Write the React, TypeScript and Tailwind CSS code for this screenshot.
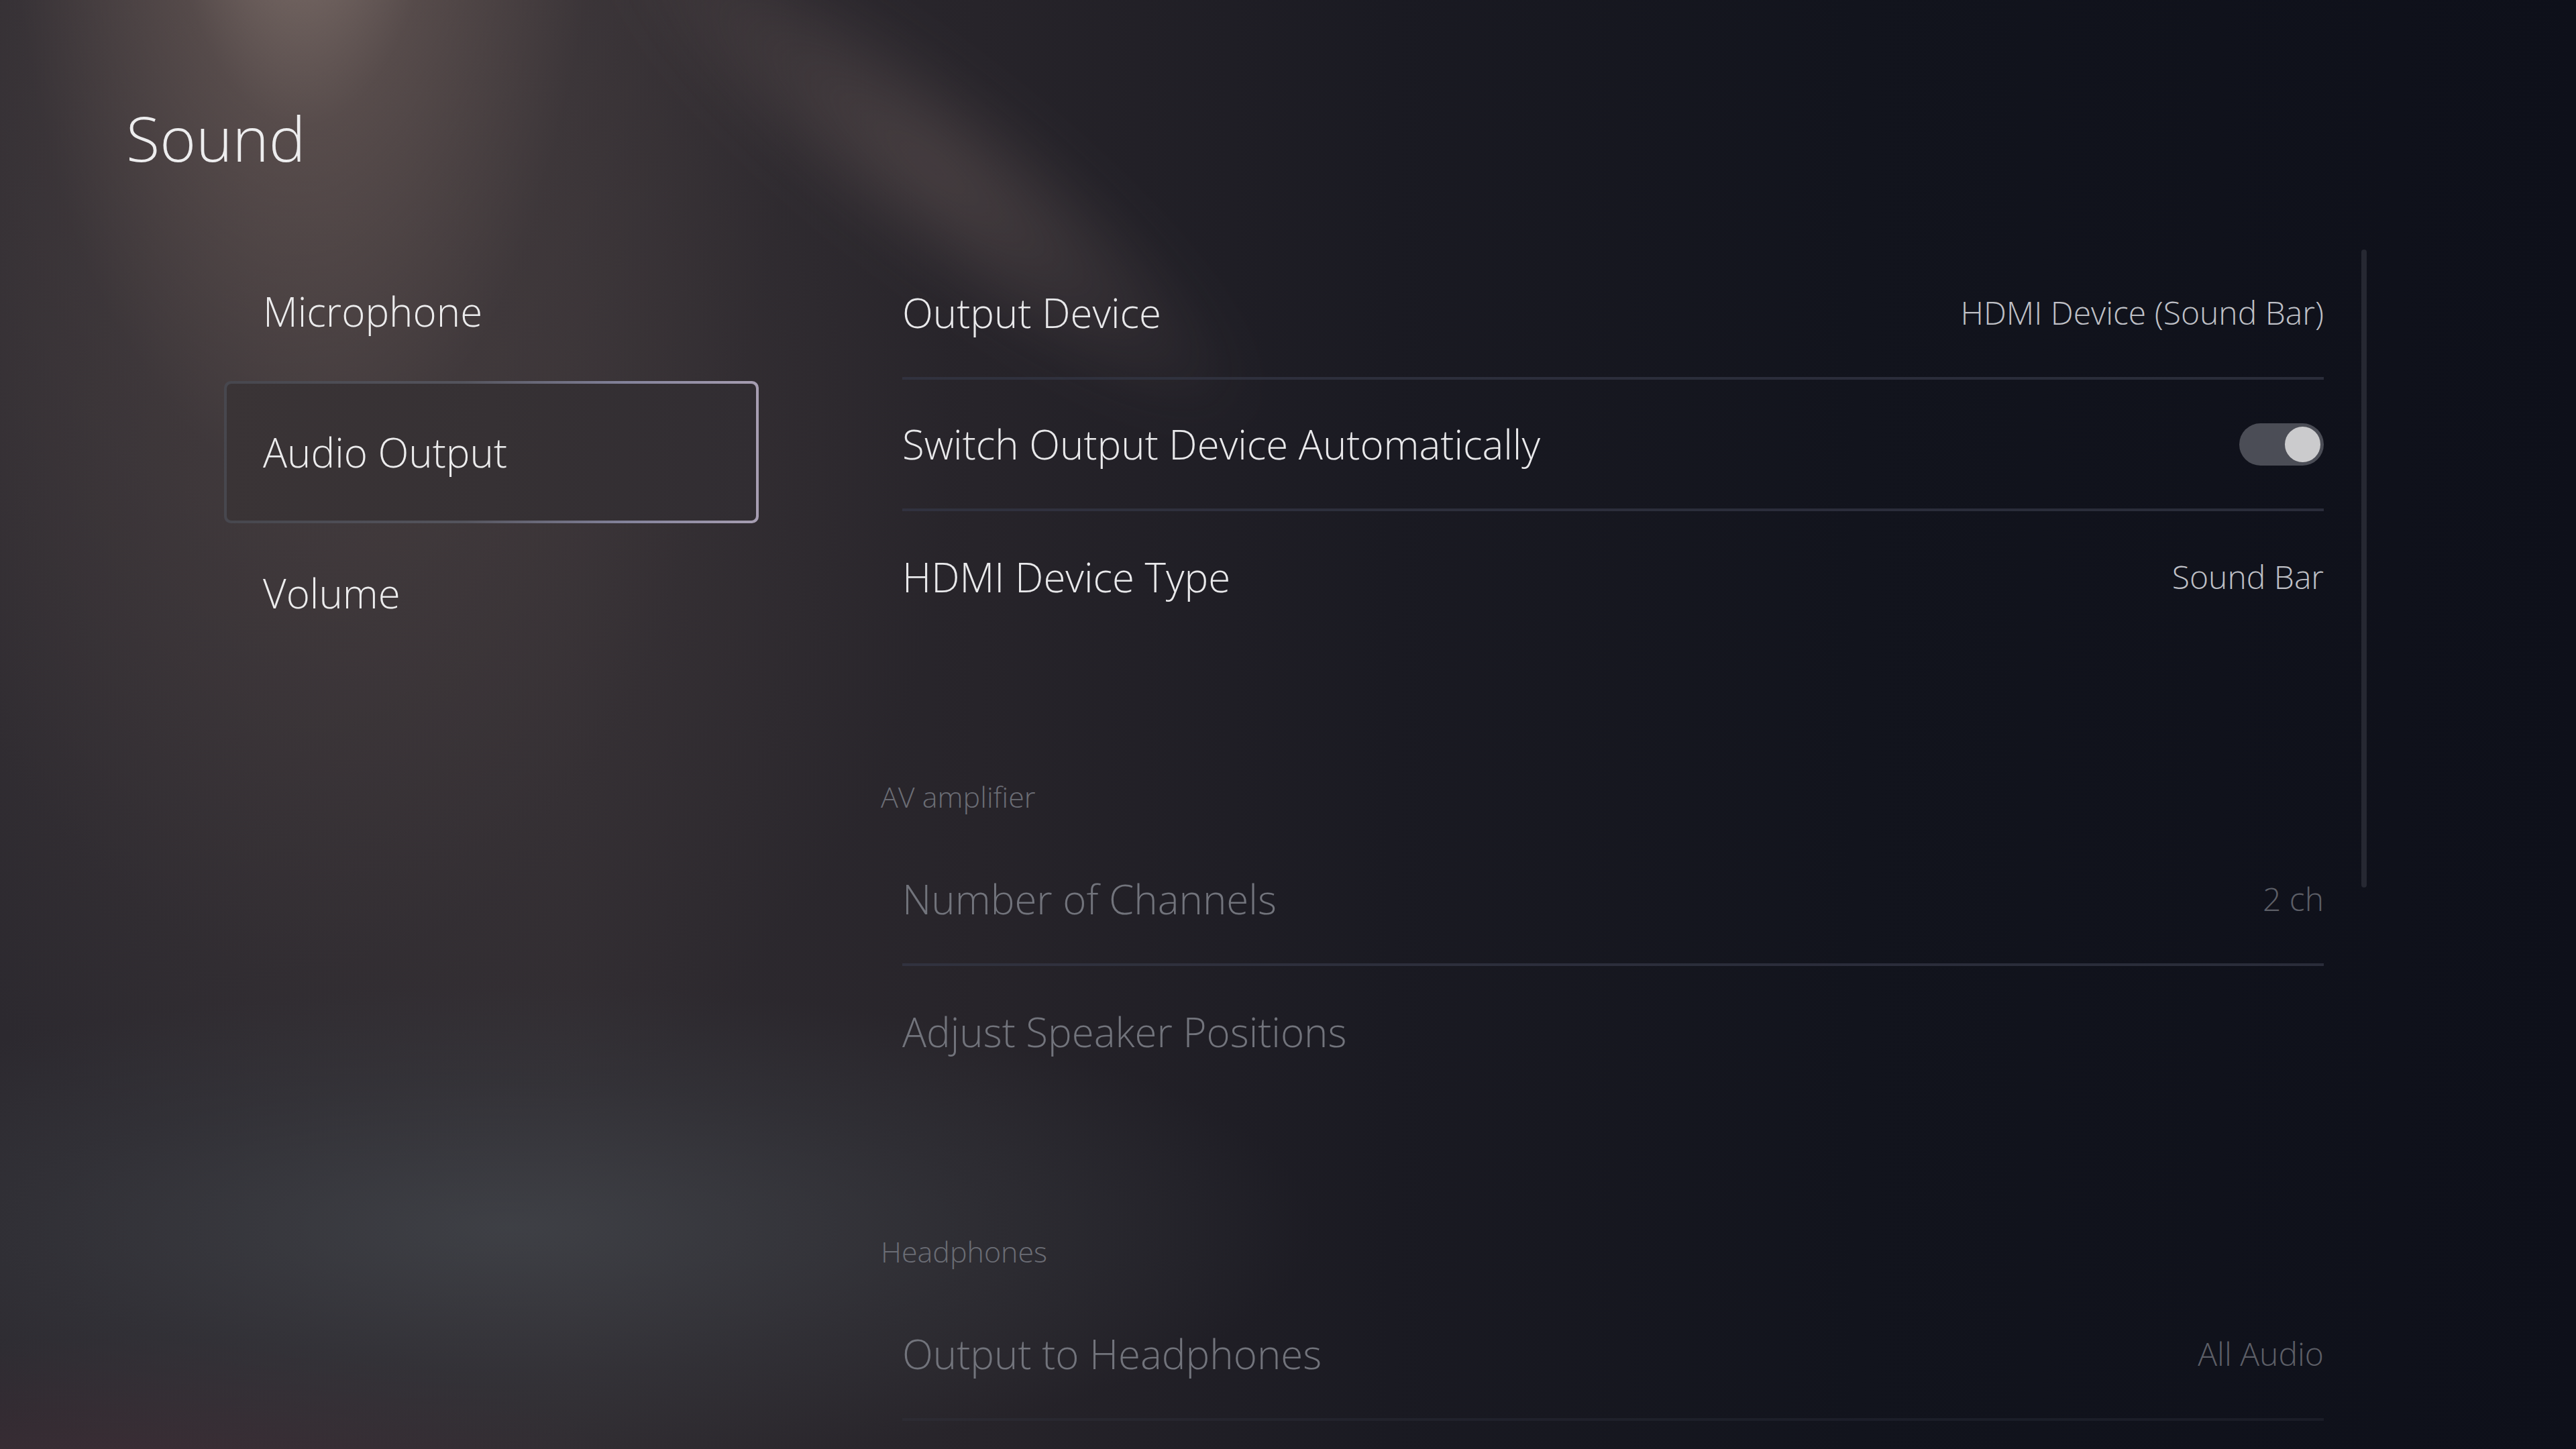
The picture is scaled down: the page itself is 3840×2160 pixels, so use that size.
import { type ReactNode } from "react";

const menu = ["Microphone", "Audio Output", "Volume"];

function Toggle() {
  return (
    <div className="flex h-[63px] w-[126px] items-center justify-end rounded-full bg-[#4b4d56] pr-[5px]">
      <div className="h-[53px] w-[53px] rounded-full bg-[#cbcbcd]" />
    </div>
  );
}

function Row({
  label,
  value,
  divider = true,
  dim = false,
  faintDivider = false,
}: {
  label: string;
  value?: ReactNode;
  divider?: boolean;
  dim?: boolean;
  faintDivider?: boolean;
}) {
  return (
    <div
      className={`mx-[32px] flex h-[196px] items-center justify-between ${
        divider
          ? faintDivider
            ? "border-b-4 border-[rgba(52,55,70,0.3)]"
            : "border-b-4 border-[rgba(52,55,70,0.72)]"
          : ""
      }`}
    >
      <span className={`text-[60px] leading-none ${dim ? "text-[#72747c]" : "text-[#e9e9eb]"}`}>
        {label}
      </span>
      {typeof value === "string" ? (
        <span className={`text-[48px] leading-none ${dim ? "text-[#5d5f67]" : "text-[#bfc0c6]"}`}>
          {value}
        </span>
      ) : (
        value
      )}
    </div>
  );
}

function SectionTitle({ children }: { children: ReactNode }) {
  return (
    <div className="mb-[27px] mt-[199px] flex h-[60px] items-center text-[43px] leading-none text-[#6b6d75]">
      {children}
    </div>
  );
}

export default function App() {
  return (
    <div className="relative h-[2160px] w-[3840px] overflow-hidden bg-[#10121b] bg-[radial-gradient(ellipse_760px_1750px_at_450px_-300px,rgba(178,157,146,0.74)_0%,rgba(124,106,100,0.47)_28%,rgba(82,72,72,0.25)_58%,transparent_100%),radial-gradient(ellipse_1600px_480px_at_760px_1830px,rgba(74,80,86,0.55)_0%,rgba(60,64,70,0.3)_45%,transparent_75%),radial-gradient(ellipse_1000px_330px_at_200px_2240px,rgba(74,50,60,0.6)_0%,transparent_75%),radial-gradient(ellipse_1250px_1500px_at_520px_650px,rgba(72,63,64,0.55)_0%,transparent_72%),linear-gradient(90deg,#2c292f_0%,#302c31_22%,#27242a_38%,#1a1a22_54%,#12141d_72%,#0e101a_100%)] font-['Open_Sans',sans-serif] font-light">
      {/* light streak */}
      <div className="pointer-events-none absolute left-[790px] top-[110px] h-[280px] w-[1200px] rotate-[38deg] bg-[radial-gradient(ellipse_closest-side,rgba(150,128,122,0.3),transparent)] blur-[36px]" />

      <div className="relative flex flex-col">
        <h1 className="pl-[188px] pt-[160px] text-[92px] font-light leading-none text-[#ededee]">Sound</h1>

        <div className="mt-[108px] flex pl-[334px]">
          {/* left menu */}
          <nav className="flex w-[797px] flex-col">
            {menu.map((item) =>
              item === "Audio Output" ? (
                <div
                  key={item}
                  className="h-[212px] rounded-[10px] bg-[linear-gradient(90deg,#47474e_0%,#54545d_45%,#83829a_75%,#a79eb2_100%)] p-[4px]"
                >
                  <div className="flex h-full items-center rounded-[7px] bg-[linear-gradient(90deg,#3a3436_0%,#363134_50%,#312d32_100%)] pl-[54px] text-[60px] leading-none text-[#ececed]">
                    {item}
                  </div>
                </div>
              ) : (
                <div key={item} className="flex h-[208px] items-center pl-[58px] text-[60px] leading-none text-[#ececed]">
                  {item}
                </div>
              )
            )}
          </nav>

          {/* settings list */}
          <div className="ml-[182px] mt-[10px] w-[2183px]">
            <Row label="Output Device" value="HDMI Device (Sound Bar)" />
            <Row label="Switch Output Device Automatically" value={<Toggle />} />
            <Row label="HDMI Device Type" value="Sound Bar" divider={false} />

            <SectionTitle>AV amplifier</SectionTitle>
            <Row label="Number of Channels" value="2 ch" dim />
            <Row label="Adjust Speaker Positions" dim divider={false} />

            <SectionTitle>Headphones</SectionTitle>
            <Row label="Output to Headphones" value="All Audio" dim faintDivider />
          </div>

          {/* scrollbar */}
          <div className="ml-[24px] mt-[12px] h-[951px] w-[8px] rounded-full bg-[#262832]" />
        </div>
      </div>
    </div>
  );
}
